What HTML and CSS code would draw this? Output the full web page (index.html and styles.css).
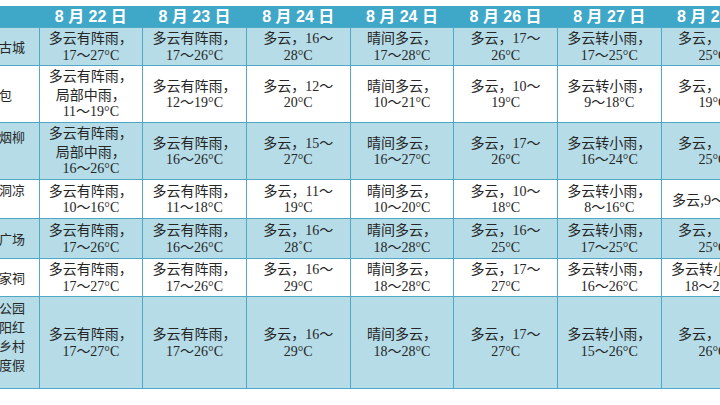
FILE: index.html
```html
<!DOCTYPE html>
<html lang="zh">
<head>
<meta charset="utf-8">
<title>天气预报</title>
<link rel="stylesheet" href="styles.css">
</head>
<body>
<div class="frame">
<table class="weather">
  <colgroup>
    <col class="c-place">
    <col class="c-day"><col class="c-day"><col class="c-day"><col class="c-day">
    <col class="c-day"><col class="c-day"><col class="c-day">
  </colgroup>
  <thead>
    <tr class="head">
      <th></th>
      <th>8 月 22 日</th>
      <th>8 月 23 日</th>
      <th>8 月 24 日</th>
      <th>8 月 24 日</th>
      <th>8 月 26 日</th>
      <th>8 月 27 日</th>
      <th>8 月 28 日</th>
    </tr>
  </thead>
  <tbody>
    <tr class="blue h38">
      <td class="place"><div class="l">丽江古城</div></td>
      <td><div class="l">多云有阵雨，</div><div class="l num">17～27°C</div></td>
      <td><div class="l">多云有阵雨，</div><div class="l num">17～26°C</div></td>
      <td><div class="l">多云，<span class="num">16～</span></div><div class="l num">28°C</div></td>
      <td><div class="l">晴间多云，</div><div class="l num">17～28°C</div></td>
      <td><div class="l">多云，<span class="num">17～</span></div><div class="l num">26°C</div></td>
      <td><div class="l">多云转小雨，</div><div class="l num">17～25°C</div></td>
      <td><div class="l">多云，<span class="num">16～</span></div><div class="l num">25°C</div></td>
    </tr>
    <tr class="white h57">
      <td class="place"><div class="l">蒙古包</div></td>
      <td><div class="l">多云有阵雨，</div><div class="l">局部中雨，</div><div class="l num">11～19°C</div></td>
      <td><div class="l">多云有阵雨，</div><div class="l num">12～19°C</div></td>
      <td><div class="l">多云，<span class="num">12～</span></div><div class="l num">20°C</div></td>
      <td><div class="l">晴间多云，</div><div class="l num">10～21°C</div></td>
      <td><div class="l">多云，<span class="num">10～</span></div><div class="l num">19°C</div></td>
      <td><div class="l">多云转小雨，</div><div class="l num">9～18°C</div></td>
      <td><div class="l">多云，<span class="num">10～</span></div><div class="l num">19°C</div></td>
    </tr>
    <tr class="blue h57">
      <td class="place up"><div class="l">苏堤烟柳</div><div class="l">林</div></td>
      <td><div class="l">多云有阵雨，</div><div class="l">局部中雨，</div><div class="l num">16～26°C</div></td>
      <td><div class="l">多云有阵雨，</div><div class="l num">16～26°C</div></td>
      <td><div class="l">多云，<span class="num">15～</span></div><div class="l num">27°C</div></td>
      <td><div class="l">晴间多云，</div><div class="l num">16～27°C</div></td>
      <td><div class="l">多云，<span class="num">17～</span></div><div class="l num">26°C</div></td>
      <td><div class="l">多云转小雨，</div><div class="l num">16～24°C</div></td>
      <td><div class="l">多云，<span class="num">15～</span></div><div class="l num">25°C</div></td>
    </tr>
    <tr class="white h38">
      <td class="place"><div class="l">仙人洞凉</div><div class="l">亭</div></td>
      <td><div class="l">多云有阵雨，</div><div class="l num">10～16°C</div></td>
      <td><div class="l">多云有阵雨，</div><div class="l num">11～18°C</div></td>
      <td><div class="l">多云，<span class="num">11～</span></div><div class="l num">19°C</div></td>
      <td><div class="l">晴间多云，</div><div class="l num">10～20°C</div></td>
      <td><div class="l">多云，<span class="num">10～</span></div><div class="l num">18°C</div></td>
      <td><div class="l">多云转小雨，</div><div class="l num">8～16°C</div></td>
      <td><div class="l">多云,<span class="num">9～17°C</span></div></td>
    </tr>
    <tr class="blue h40">
      <td class="place"><div class="l">人民广场</div></td>
      <td><div class="l">多云有阵雨，</div><div class="l num">17～26°C</div></td>
      <td><div class="l">多云有阵雨，</div><div class="l num">16～26°C</div></td>
      <td><div class="l">多云，<span class="num">16～</span></div><div class="l num">28˚C</div></td>
      <td><div class="l">晴间多云，</div><div class="l num">18～28°C</div></td>
      <td><div class="l">多云，<span class="num">16～</span></div><div class="l num">25°C</div></td>
      <td><div class="l">多云转小雨，</div><div class="l num">17～25°C</div></td>
      <td><div class="l">多云，<span class="num">16～</span></div><div class="l num">25°C</div></td>
    </tr>
    <tr class="white h38">
      <td class="place"><div class="l">陈氏家祠</div></td>
      <td><div class="l">多云有阵雨，</div><div class="l num">17～27°C</div></td>
      <td><div class="l">多云有阵雨，</div><div class="l num">17～26°C</div></td>
      <td><div class="l">多云，<span class="num">16～</span></div><div class="l num">29°C</div></td>
      <td><div class="l">晴间多云，</div><div class="l num">18～28°C</div></td>
      <td><div class="l">多云，<span class="num">17～</span></div><div class="l num">27°C</div></td>
      <td><div class="l">多云转小雨，</div><div class="l num">16～26°C</div></td>
      <td><div class="l">多云转小雨，</div><div class="l num">18～27°C</div></td>
    </tr>
    <tr class="blue h92">
      <td class="place up2"><div class="l">森林公园</div><div class="l">及向阳红</div><div class="l">色美乡村</div><div class="l">旅游度假</div></td>
      <td><div class="l">多云有阵雨，</div><div class="l num">17～27°C</div></td>
      <td><div class="l">多云有阵雨，</div><div class="l num">17～26°C</div></td>
      <td><div class="l">多云，<span class="num">16～</span></div><div class="l num">29°C</div></td>
      <td><div class="l">晴间多云，</div><div class="l num">18～28°C</div></td>
      <td><div class="l">多云，<span class="num">17～</span></div><div class="l num">27°C</div></td>
      <td><div class="l">多云转小雨，</div><div class="l num">15～26°C</div></td>
      <td><div class="l">多云，<span class="num">16～</span></div><div class="l num">26°C</div></td>
    </tr>
  </tbody>
</table>
</div>
</body>
</html>
```

FILE: styles.css
```css
html, body {
  margin: 0;
  padding: 0;
  background: #ffffff;
}

.frame {
  width: 720px;
  height: 405px;
  overflow: hidden;
  padding-top: 6px;
  box-sizing: border-box;
}

.weather {
  margin-left: -42px;
  border-collapse: collapse;
  table-layout: fixed;
  width: 807px;
  font-family: "Noto Sans CJK SC", "Noto Sans", sans-serif;
  font-size: 14px;
  line-height: 18.5px;
  color: #262626;
}

.c-place { width: 81px; }
.c-day { width: 103.7px; }

.head th {
  background: #3fa8c8;
  color: #ffffff;
  font-family: "Liberation Sans", "Noto Sans CJK SC", sans-serif;
  font-weight: bold;
  font-size: 16px;
  line-height: 20px;
  height: 21px;
  padding: 0;
  text-align: center;
  white-space: nowrap;
  overflow: hidden;
}

.weather td {
  border: 1px solid #4ea8c6;
  text-align: center;
  vertical-align: middle;
  padding: 0 2px;
  overflow: hidden;
}

.l {
  height: 18.5px;
  line-height: 18.5px;
  white-space: nowrap;
}

.weather td.place {
  text-align: left;
  font-size: 13px;
  padding: 0 14px 0 15px;
  border-left: none;
}

.weather td.place .l { height: 19px; line-height: 19px; }

.num {
  font-family: "Liberation Serif", "Noto Sans CJK SC", serif;
  font-size: 14px;
}

.blue td { background: #b5dce7; }
.white td { background: #ffffff; }

.h38 td { height: 37px; }
.h40 td { height: 39px; }
.h57 td { height: 56px; }
.h92 td { height: 91px; }

.h57 td.up { height: 46px; padding-bottom: 10px; }
.h92 td.up2 { height: 77px; padding-bottom: 14px; }
```
